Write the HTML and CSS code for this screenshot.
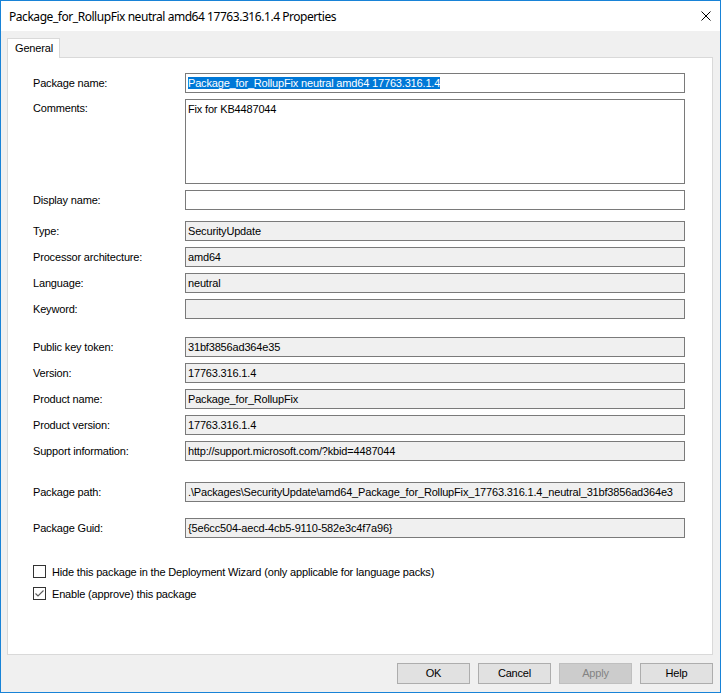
FILE: index.html
```html
<!DOCTYPE html>
<html>
<head>
<meta charset="utf-8">
<link rel="stylesheet" href="styles.css">
</head>
<body>
<div class="window">
  <div class="titlebar">
    <span class="title">Package_for_RollupFix neutral amd64 17763.316.1.4 Properties</span>
    <svg class="close" width="10" height="10" viewBox="0 0 10 10"><path d="M0.5 0.5 L9.5 9.5 M9.5 0.5 L0.5 9.5" stroke="#000" stroke-width="1" fill="none"/></svg>
  </div>
  <div class="client">
    <div class="tabs"><div class="tab">General</div></div>
    <div class="panel">
      <div class="section">
        <div class="row"><div class="label">Package name:</div><div class="box edit"><span class="sel">Package_for_RollupFix neutral amd64 17763.316.1.4</span></div></div>
        <div class="row top"><div class="label">Comments:</div><div class="box edit multi">Fix for KB4487044</div></div>
        <div class="row"><div class="label">Display name:</div><div class="box edit"></div></div>
      </div>
      <div class="section s2">
        <div class="row"><div class="label">Type:</div><div class="box">SecurityUpdate</div></div>
        <div class="row"><div class="label">Processor architecture:</div><div class="box">amd64</div></div>
        <div class="row"><div class="label">Language:</div><div class="box">neutral</div></div>
        <div class="row"><div class="label">Keyword:</div><div class="box"></div></div>
      </div>
      <div class="section s3">
        <div class="row"><div class="label">Public key token:</div><div class="box">31bf3856ad364e35</div></div>
        <div class="row"><div class="label">Version:</div><div class="box">17763.316.1.4</div></div>
        <div class="row"><div class="label">Product name:</div><div class="box">Package_for_RollupFix</div></div>
        <div class="row"><div class="label">Product version:</div><div class="box">17763.316.1.4</div></div>
        <div class="row"><div class="label">Support information:</div><div class="box">http://support.microsoft.com/?kbid=4487044</div></div>
      </div>
      <div class="section s4">
        <div class="row"><div class="label">Package path:</div><div class="box">.\Packages\SecurityUpdate\amd64_Package_for_RollupFix_17763.316.1.4_neutral_31bf3856ad364e3</div></div>
      </div>
      <div class="section s5">
        <div class="row"><div class="label">Package Guid:</div><div class="box">{5e6cc504-aecd-4cb5-9110-582e3c4f7a96}</div></div>
      </div>
      <div class="checks">
        <div class="check"><span class="cb"></span><span>Hide this package in the Deployment Wizard (only applicable for language packs)</span></div>
        <div class="check"><span class="cb"><svg width="11" height="11" viewBox="0 0 11 11"><path d="M1.5 5.5 L4 8 L9.5 2.5" stroke="#5a5a5a" stroke-width="1.1" fill="none"/></svg></span><span>Enable (approve) this package</span></div>
      </div>
    </div>
    <div class="buttons">
      <div class="btn">OK</div>
      <div class="btn">Cancel</div>
      <div class="btn disabled">Apply</div>
      <div class="btn">Help</div>
    </div>
  </div>
</div>
</body>
</html>
```
FILE: styles.css
```css
html, body {
  margin: 0;
  padding: 0;
  background: #fff;
}
.window {
  width: 721px;
  height: 693px;
  box-sizing: border-box;
  border: 1px solid #1883d7;
  background: #f0f0f0;
  display: flex;
  flex-direction: column;
  font-family: "Liberation Sans", Arial, sans-serif;
  font-size: 11px;
  letter-spacing: -0.17px;
  color: #000;
}
.titlebar {
  height: 30px;
  flex: none;
  background: #fff;
  display: flex;
  align-items: center;
  padding-left: 8px;
}
.title {
  font-family: "Noto Sans", "Open Sans", sans-serif;
  font-size: 12px;
  color: #000;
  letter-spacing: -0.45px;
}
.close {
  margin-left: auto;
  margin-right: 9px;
  display: block;
}
.client {
  flex: 1;
  display: flex;
  flex-direction: column;
  padding: 7px 7px 0 6px;
}
.tabs {
  display: flex;
  height: 19px;
}
.tab {
  width: 53px;
  height: 20px;
  box-sizing: border-box;
  border: 1px solid #d9d9d9;
  border-bottom: none;
  background: #fff;
  padding-left: 7px;
  line-height: 18px;
  position: relative;
  z-index: 1;
}
.panel {
  height: 598px;
  box-sizing: border-box;
  border: 1px solid #d9d9d9;
  background: #fff;
  padding: 15px 0 0 25px;
  display: flex;
  flex-direction: column;
}
.section {
  display: flex;
  flex-direction: column;
  gap: 6px;
}
.s2 { margin-top: 11px; }
.s3 { margin-top: 18px; }
.s4 { margin-top: 21px; }
.s5 { margin-top: 16px; }
.row {
  display: flex;
  align-items: center;
}
.row.top {
  align-items: flex-start;
}
.row.top .label {
  padding-top: 3px;
}
.label {
  width: 152px;
  flex: none;
}
.box {
  width: 500px;
  height: 20px;
  box-sizing: border-box;
  border: 1px solid #7a7a7a;
  background: #f0f0f0;
  padding: 0 2px;
  line-height: 18px;
  white-space: nowrap;
  overflow: hidden;
}
.box.edit {
  background: #fff;
}
.box.multi {
  height: 85px;
  line-height: 18px;
}
.sel {
  background: #0078d7;
  color: #fff;
}
.checks {
  margin-top: 27px;
  display: flex;
  flex-direction: column;
  gap: 9px;
}
.check {
  display: flex;
  align-items: center;
  gap: 6px;
  height: 13px;
}
.cb {
  width: 13px;
  height: 13px;
  box-sizing: border-box;
  border: 1px solid #333;
  background: #fff;
  display: flex;
  align-items: center;
  justify-content: center;
}
.cb svg { display: block; }
.buttons {
  display: flex;
  justify-content: flex-end;
  gap: 8px;
  padding-top: 8px;
}
.btn {
  width: 73px;
  height: 21px;
  box-sizing: border-box;
  border: 1px solid #adadad;
  background: #e1e1e1;
  text-align: center;
  line-height: 19px;
}
.btn.disabled {
  background: #cccccc;
  border-color: #bfbfbf;
  color: #838383;
}
```
